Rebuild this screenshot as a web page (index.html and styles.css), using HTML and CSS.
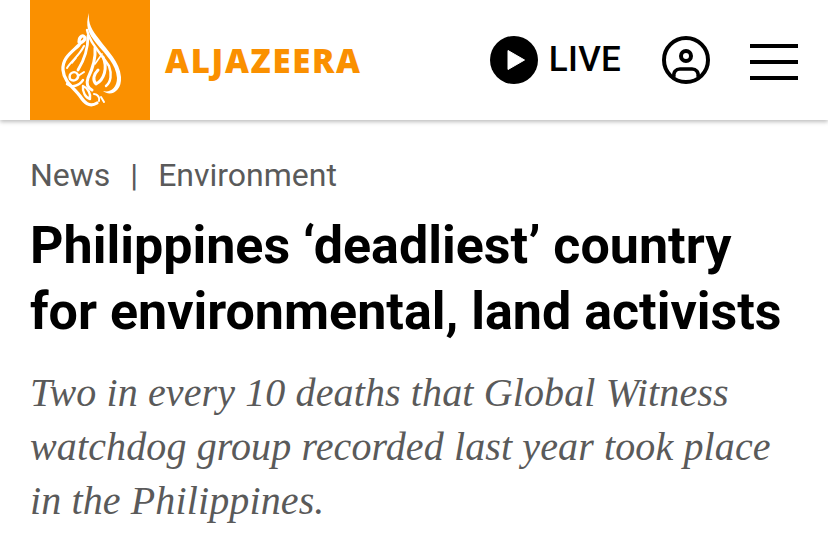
FILE: index.html
```html
<!DOCTYPE html>
<html lang="en">
	<head>
		<meta charset="UTF-8" />
		<meta name="viewport" content="width=device-width, initial-scale=1.0" />
		<title>Philippines ‘deadliest’ country for environmental, land activists</title>
		<link rel="stylesheet" href="styles.css">
	</head>
	<body>
		<header class="header">
			<a class="brand" href="#">
				<span class="brand-mark">
					<svg class="brand-logo" viewBox="0 0 120 120" fill="none" stroke="#fff" stroke-linecap="round" stroke-linejoin="round">
						<!-- long sweep from the tip round the right side, filled so it tapers -->
						<path d="M59 13C55 26 58 33 66 43C76 55 86 64 87 78C87 88 80 93 73 91C80 97 92 92 91 77C90 62 77 50 69 39C62 30 58 24 59 13Z" fill="#fff" stroke="none" />
						<path d="M57 30C59 42 70 52 79 66C82 74 81 82 76 86" stroke-width="2.4" />
						<!-- hook and left side of the drop -->
						<path d="M49 42C49 36 54 34 55 38C55 42 50 42 49 45C42 52 32 58 33 70C34 82 44 88 50 96C54 102 59 108 67 103" stroke-width="3.2" />
						<path d="M37 68C42 60 49 56 54 46" stroke-width="2" />
						<!-- inner strokes -->
						<path d="M40 79C38 72 46 70 48 75C49 80 43 82 40 79M37 84C42 88 49 86 53 80" stroke-width="2.4" />
						<path d="M58 36C58 50 53 62 48 70" stroke-width="2.8" />
						<path d="M65 48C66 60 62 70 58 78C56 84 58 88 62 90" stroke-width="3" />
						<path d="M73 57C78 68 74 80 66 84C62 80 64 74 68 70" stroke-width="3" />
						<path d="M65 64L72 54M42 63L46 58" stroke-width="1.6" />
						<path d="M53 86C58 88 61 94 60 99C56 98 52 92 53 86Z" stroke-width="2.4" />
						<path d="M64 94C68 94 70 98 69 101M71 97L74 102M48 76L54 72" stroke-width="2" />
					</svg>
				</span>
				<span class="brand-name">ALJAZEERA</span>
			</a>
			<div class="tools">
				<a class="live" href="#">
					<svg class="icon" viewBox="0 0 48 48">
						<circle cx="24" cy="24" r="24" fill="#000" />
						<path d="M18 14.5L34.5 24L18 33.5Z" fill="#fff" stroke="#fff" stroke-width="1" stroke-linejoin="round" />
					</svg>
					<span class="live-text">LIVE</span>
				</a>
				<a class="user" href="#">
					<svg class="icon" viewBox="0 0 48 48" fill="none" stroke="#000" stroke-width="4">
						<circle cx="24" cy="24" r="22" />
						<circle cx="24" cy="20" r="5" stroke-width="4" />
						<path d="M12 41C11 36 14 33 18 33H30C34 33 37 36 36 41" stroke-width="3.5" />
					</svg>
				</a>
				<div class="menu">
					<span></span>
					<span></span>
					<span></span>
				</div>
			</div>
		</header>
		<main class="article">
			<div class="crumbs">
				<span>News</span>
				<span class="crumb-sep">|</span>
				<span>Environment</span>
			</div>
			<h1 class="title">Philippines ‘deadliest’ country for environmental, land activists</h1>
			<p class="summary">Two in every 10 deaths that Global Witness watchdog group recorded last year took place in the Philippines.</p>
		</main>
	</body>
</html>
```

FILE: styles.css
```css
* {
	margin: 0;
	padding: 0;
	box-sizing: border-box;
}
html,
body {
	height: 100%;
	overflow: hidden;
}
body {
	background-color: #fff;
	color: #000;
	font-family: Roboto, "Liberation Sans", sans-serif;
}
a {
	color: inherit;
	text-decoration: none;
}
.header {
	height: 120px;
	padding: 0 30px;
	display: flex;
	align-items: center;
	justify-content: space-between;
	box-shadow: 0 2px 4px rgba(0, 0, 0, 0.25);
}
.brand {
	display: flex;
	align-items: center;
	gap: 15px;
}
.brand-mark {
	width: 120px;
	height: 120px;
	background-color: #fa9000;
	display: block;
}
.brand-logo {
	width: 120px;
	height: 120px;
	display: block;
}
.brand-name {
	font-family: "Open Sans", sans-serif;
	font-weight: 800;
	font-size: 33px;
	color: #fa9000;
	letter-spacing: 1.7px;
}
.tools {
	display: flex;
	align-items: center;
}
.icon {
	width: 48px;
	height: 48px;
	display: block;
}
.live {
	display: flex;
	align-items: center;
	gap: 11px;
}
.live-text {
	font-size: 35px;
	font-weight: 500;
	letter-spacing: 0.25px;
	position: relative;
	top: -1px;
}
.user {
	margin-left: 41px;
}
.menu {
	margin-top: 4px;
	margin-left: 40px;
	width: 48px;
	display: flex;
	flex-direction: column;
	gap: 12px;
}
.menu span {
	height: 4px;
	background-color: #000;
}
.article {
	padding: 36px 30px 0;
}
.crumbs {
	display: flex;
	align-items: baseline;
	font-size: 32px;
	line-height: 38px;
	color: #5a5a5a;
}
.crumb-sep {
	margin: 0 20px;
	font-size: 32px;
	line-height: 1;
}
.title {
	margin-top: 19px;
	font-size: 52px;
	font-weight: 700;
	line-height: 66px;
}
.summary {
	margin-top: 21px;
	font-family: "Liberation Serif", serif;
	font-style: italic;
	font-size: 40px;
	letter-spacing: 0.12px;
	line-height: 54px;
	color: #5a5a5a;
}
```
